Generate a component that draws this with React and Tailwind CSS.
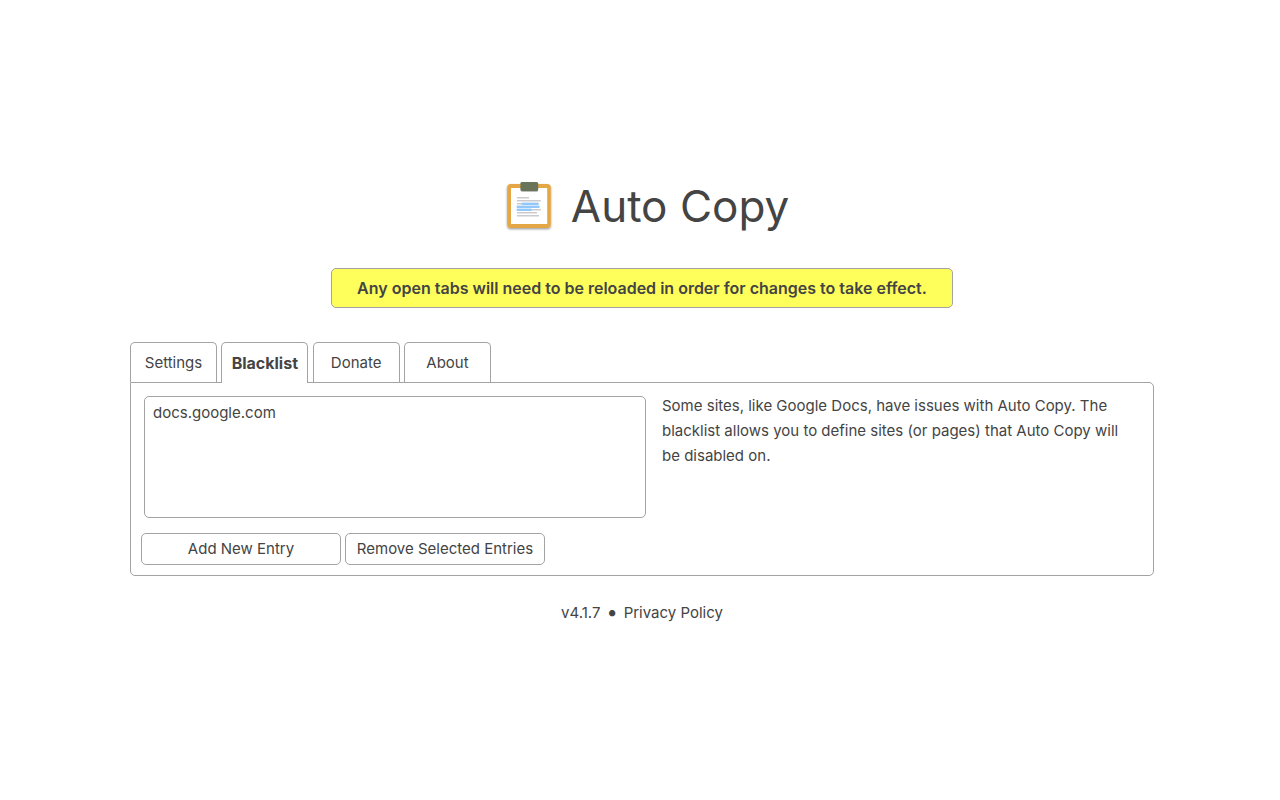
import React, { useState } from "react";

const TABS = ["Settings", "Blacklist", "Donate", "About"];

function ClipboardLogo() {
  return (
    <svg viewBox="0 0 52 54" className="h-[54px] w-[52px] shrink-0" aria-hidden="true">
      <defs>
        <filter id="logo-shadow" x="-20%" y="-20%" width="140%" height="140%">
          <feDropShadow dx="0" dy="1.2" stdDeviation="1" floodColor="#000" floodOpacity="0.4" />
        </filter>
      </defs>
      <rect x="4.2" y="5" width="43.6" height="44" rx="3.5" fill="#e5a744" filter="url(#logo-shadow)" />
      <rect x="8" y="9" width="36.2" height="36" fill="#fff" />
      <rect x="18" y="4.5" width="17" height="8.5" rx="1.5" fill="#000" opacity="0.25" />
      <rect x="17.4" y="3" width="17.8" height="9" rx="1.5" fill="#6a7459" />
      <g fill="#cbcbcf">
        <rect x="14" y="18" width="12" height="1.5" />
        <rect x="14" y="21" width="23.8" height="1.5" />
        <rect x="14" y="24" width="22" height="1.5" />
        <rect x="14" y="30" width="23.8" height="1.5" />
        <rect x="14" y="33" width="20" height="1.5" />
        <rect x="14" y="36" width="22" height="1.5" />
      </g>
      <g fill="#93c8fc">
        <rect x="18.7" y="23.6" width="16.6" height="2.4" />
        <rect x="13.7" y="26.6" width="22.8" height="2.4" />
        <rect x="13.7" y="29.6" width="14.8" height="2.4" />
      </g>
    </svg>
  );
}

function Tab({ label, active, onClick }) {
  return (
    <button
      type="button"
      role="tab"
      aria-selected={active}
      onClick={onClick}
      className={
        "w-[87px] rounded-t-[5px] border border-b-0 border-[#a3a3a3] bg-white text-center " +
        (active ? "relative -mb-px h-[41px] text-base font-bold" : "h-10 pt-[2px]")
      }
    >
      {label}
    </button>
  );
}

export default function App() {
  const [tab, setTab] = useState("Blacklist");
  return (
    <div className="min-h-screen bg-white pl-1 font-['Inter',sans-serif] text-[15px] text-[#444]">
      <main className="mx-auto flex max-w-5xl flex-col pt-[179px] pb-10">
        <h1 className="flex items-center justify-center gap-4 pl-2 text-[44px] leading-[54px]">
          <ClipboardLogo />
          Auto Copy
        </h1>

        <p className="mx-auto mt-[35px] flex h-10 w-full max-w-[622px] items-center justify-center rounded-[5px] border border-[#a3a3a3] bg-[#ffff5c] text-base font-semibold">
          Any open tabs will need to be reloaded in order for changes to take effect.
        </p>

        <div role="tablist" className="mt-[34px] flex h-10 w-[361px] justify-between">
          {TABS.map((t) => (
            <Tab key={t} label={t} active={t === tab} onClick={() => setTab(t)} />
          ))}
        </div>

        <section
          role="tabpanel"
          className="rounded-[5px] rounded-tl-none border border-[#a3a3a3] p-[10px]"
        >
          <div className="grid grid-cols-[508fr_481fr] gap-[13px]">
            <div className="p-[3px]">
              <select
                multiple
                aria-label="Blacklisted sites"
                className="block h-[122px] w-full rounded-[5px] border border-[#a3a3a3] bg-white px-2 py-[6px]"
              >
                <option className="p-0">docs.google.com</option>
              </select>
            </div>
            <p className="pr-3 leading-[25px]">
              Some sites, like Google Docs, have issues with Auto Copy. The blacklist allows you to
              define sites (or pages) that Auto Copy will be disabled on.
            </p>
          </div>
          <div className="mt-3 flex gap-1">
            <button type="button" className="h-8 w-[200px] rounded-[5px] border border-[#a3a3a3]">
              Add New Entry
            </button>
            <button type="button" className="h-8 w-[200px] rounded-[5px] border border-[#a3a3a3]">
              Remove Selected Entries
            </button>
          </div>
        </section>

        <footer className="mt-6 flex items-center justify-center gap-[6px] leading-[25px]">
          <span>v4.1.7</span>
          <span className="text-xl leading-[25px]">•</span>
          <a href="#privacy">Privacy Policy</a>
        </footer>
      </main>
    </div>
  );
}
